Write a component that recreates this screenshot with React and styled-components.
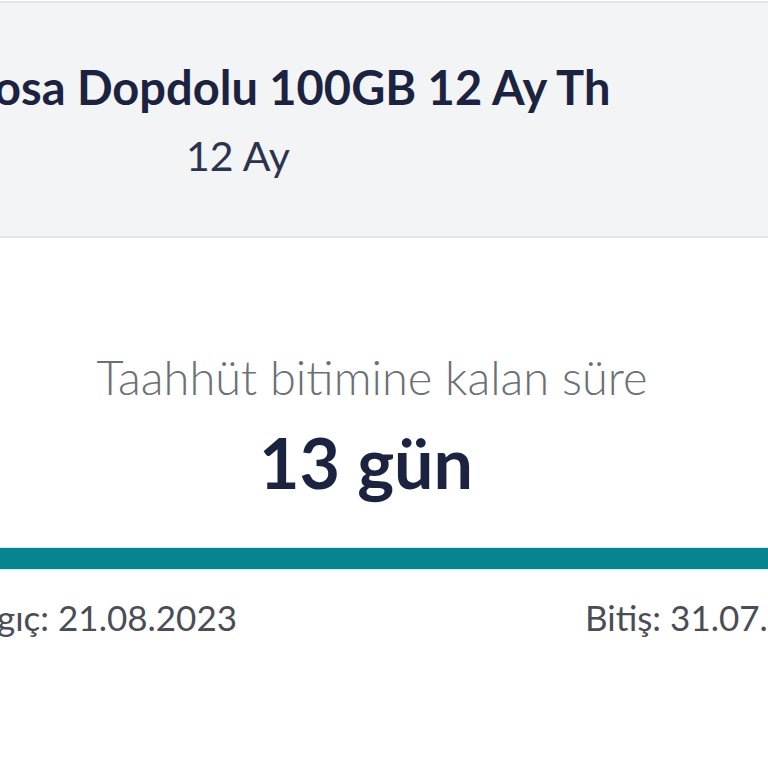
import React from "react";
import styled, { createGlobalStyle } from "styled-components";

const Global = createGlobalStyle`
  html, body { margin: 0; padding: 0; background: #ffffff; overflow: hidden; }
  body { font-family: Lato, "Noto Sans", sans-serif; width: 768px; height: 768px; }
`;

const Page = styled.div`
  width: 768px;
  height: 768px;
  overflow: hidden;
  display: flex;
  flex-direction: column;
`;

const PlanPanel = styled.section`
  margin-top: 1px;
  height: 237px;
  box-sizing: border-box;
  background: #f3f4f6;
  border-top: 2px solid #e3e5e8;
  border-bottom: 2px solid #e3e5e8;
  display: flex;
  flex-direction: column;
  align-items: flex-start;
  padding-top: 58px;
  flex-shrink: 0;
`;

const PlanTitle = styled.h1`
  margin: 0 0 0 -6px;
  white-space: nowrap;
  font-size: 47px;
  line-height: 52px;
  font-weight: 700;
  color: #1b2340;
`;

const PlanTerm = styled.div`
  margin: 21px 0 0 ${(p) => p.$offset}px;
  font-size: 41px;
  line-height: 44px;
  font-weight: 400;
  color: #2b3350;
`;

const Countdown = styled.section`
  width: 744px;
  display: flex;
  flex-direction: column;
  align-items: center;
  padding-top: 112px;
`;

const CountLabel = styled.div`
  font-size: 47px;
  line-height: 54px;
  font-weight: 300;
  color: #6c6f77;
`;

const CountValue = styled.div`
  margin: 20px 12px 0 0;
  font-size: 70px;
  line-height: 76px;
  font-weight: 700;
  color: #1b2340;
`;

const ProgressBar = styled.div`
  margin-top: 48px;
  height: 21px;
  flex-shrink: 0;
  background: #08848f;
  box-shadow: 0 -1px 0 #c9f1f4, 0 1px 0 #c9f1f4;
`;

const DateRow = styled.div`
  display: grid;
  grid-template-columns: 585px auto;
  margin-top: 26px;
  white-space: nowrap;
`;

const DateText = styled.div`
  margin-left: ${(p) => p.$shift || 0}px;
  font-size: 35px;
  line-height: 44px;
  font-weight: 400;
  color: #4a4d56;
`;

export default function App() {
  return (
    <>
      <Global />
      <Page>
        <PlanPanel>
          <PlanTitle>osa Dopdolu 100GB 12 Ay Th</PlanTitle>
          <PlanTerm $offset={186}>12 Ay</PlanTerm>
        </PlanPanel>
        <Countdown>
          <CountLabel>Taahhüt bitimine kalan süre</CountLabel>
          <CountValue>13 gün</CountValue>
        </Countdown>
        <ProgressBar />
        <DateRow>
          <DateText $shift={-3}>gıç: 21.08.2023</DateText>
          <DateText>Bitiş: 31.07.2024</DateText>
        </DateRow>
      </Page>
    </>
  );
}
